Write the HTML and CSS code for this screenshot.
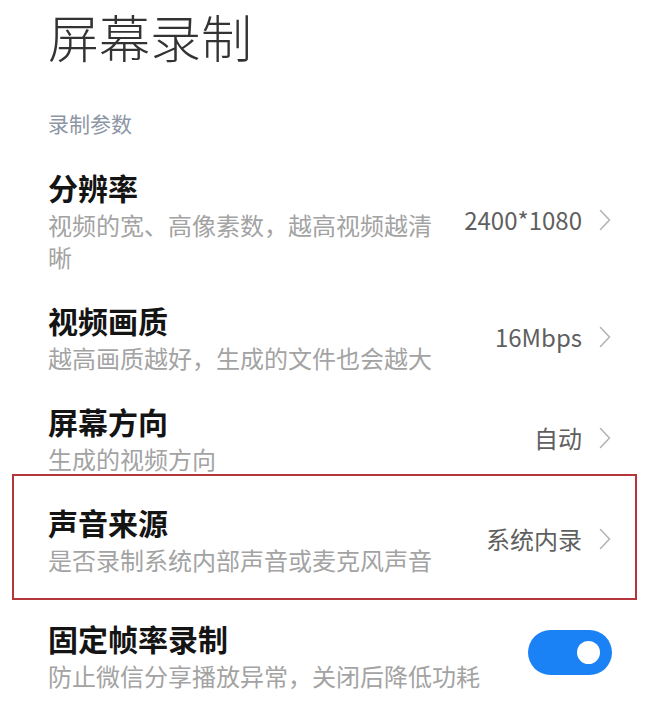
FILE: index.html
```html
<!DOCTYPE html>
<html lang="zh-CN">
<head>
<meta charset="utf-8">
<title>屏幕录制</title>
<link rel="stylesheet" href="styles.css">
</head>
<body>
<main class="page">
  <h1 class="page-title">屏幕录制</h1>
  <h2 class="section-title">录制参数</h2>
  <ul class="list">
    <li class="row">
      <div class="text">
        <div class="row-title">分辨率</div>
        <div class="row-desc">视频的宽、高像素数，越高视频越清晰</div>
      </div>
      <div class="value">2400*1080</div>
      <svg class="chevron" viewBox="0 0 12 22" width="12" height="22"><polyline points="1.5,1.5 10.5,11 1.5,20.5"/></svg>
    </li>
    <li class="row">
      <div class="text">
        <div class="row-title">视频画质</div>
        <div class="row-desc">越高画质越好，生成的文件也会越大</div>
      </div>
      <div class="value">16Mbps</div>
      <svg class="chevron" viewBox="0 0 12 22" width="12" height="22"><polyline points="1.5,1.5 10.5,11 1.5,20.5"/></svg>
    </li>
    <li class="row">
      <div class="text">
        <div class="row-title">屏幕方向</div>
        <div class="row-desc">生成的视频方向</div>
      </div>
      <div class="value">自动</div>
      <svg class="chevron" viewBox="0 0 12 22" width="12" height="22"><polyline points="1.5,1.5 10.5,11 1.5,20.5"/></svg>
    </li>
    <li class="row row-highlight">
      <div class="text">
        <div class="row-title">声音来源</div>
        <div class="row-desc">是否录制系统内部声音或麦克风声音</div>
      </div>
      <div class="value">系统内录</div>
      <svg class="chevron" viewBox="0 0 12 22" width="12" height="22"><polyline points="1.5,1.5 10.5,11 1.5,20.5"/></svg>
    </li>
    <li class="row row-switch">
      <div class="text">
        <div class="row-title">固定帧率录制</div>
        <div class="row-desc">防止微信分享播放异常，关闭后降低功耗</div>
      </div>
      <div class="toggle on"><span class="knob"></span></div>
    </li>
  </ul>
</main>
</body>
</html>
```
FILE: styles.css
```css
* { box-sizing: border-box; }

html, body {
  margin: 0;
  padding: 0;
  background: #ffffff;
}

body {
  font-family: "Noto Sans CJK SC", "Noto Sans", sans-serif;
  color: #111;
}

.page {
  padding: 6px 0 0 48px;
  width: 668px;
}

.page-title {
  margin: 0;
  font-size: 51px;
  line-height: 60px;
  font-weight: 300;
  color: #333;
}

.section-title {
  margin: 42px 0 15px;
  font-size: 21px;
  line-height: 30px;
  font-weight: 400;
  color: #8c96a6;
}

.list {
  list-style: none;
  margin: 0;
  padding: 0;
}

.row {
  position: relative;
  display: flex;
  align-items: center;
  padding: 14px 57px 13px 0;
}

.text {
  flex: 1;
  min-width: 0;
  margin-right: 20px;
}

.row-title {
  font-size: 30px;
  line-height: 40px;
  font-weight: 700;
  color: #141414;
}

.row-desc {
  margin-top: 2px;
  font-size: 24px;
  line-height: 32px;
  color: #a3a3a3;
}

.value {
  font-size: 24px;
  line-height: 32px;
  color: #5f5f5f;
  white-space: nowrap;
}

.chevron {
  flex: none;
  margin-left: 17px;
  fill: none;
  stroke: #b4b4b4;
  stroke-width: 1.6;
  stroke-linecap: round;
  stroke-linejoin: round;
}

.row-highlight::after {
  content: "";
  position: absolute;
  top: -14px;
  bottom: -11px;
  left: -36px;
  right: 31px;
  border: 2px solid #b3363a;
  pointer-events: none;
}

.row-switch {
  margin-top: 15px;
  padding-right: 56px;
}

.toggle {
  flex: none;
  position: relative;
  width: 84px;
  height: 45px;
  border-radius: 23px;
  background: #1a82f4;
  margin-top: -6px;
}

.toggle .knob {
  position: absolute;
  top: 11px;
  right: 12px;
  width: 23px;
  height: 23px;
  border-radius: 50%;
  background: #ffffff;
}
```
